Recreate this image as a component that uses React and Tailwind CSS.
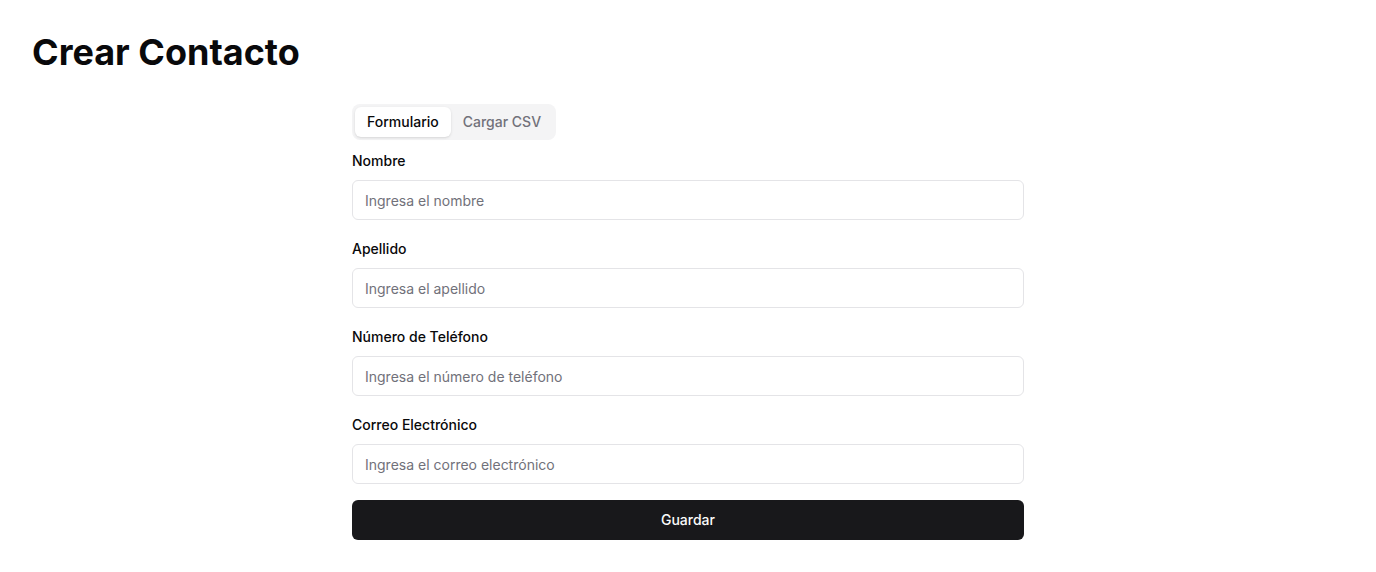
import React, { useState } from 'react';

const fields = [
  { id: 'nombre', label: 'Nombre', placeholder: 'Ingresa el nombre', type: 'text' },
  { id: 'apellido', label: 'Apellido', placeholder: 'Ingresa el apellido', type: 'text' },
  { id: 'telefono', label: 'Número de Teléfono', placeholder: 'Ingresa el número de teléfono', type: 'tel' },
  { id: 'correo', label: 'Correo Electrónico', placeholder: 'Ingresa el correo electrónico', type: 'email' },
];

export default function App() {
  const [tab, setTab] = useState('form');

  return (
    <div className="min-h-screen bg-white px-8 pt-8 font-['Inter',sans-serif] text-[#09090b]">
      <h1 className="mb-8 text-4xl leading-10 font-bold">Crear Contacto</h1>

      <div className="mx-auto max-w-2xl">
        <div className="inline-flex h-9 items-center rounded-lg bg-[#f4f4f5] p-[3px] text-[#71717a]">
          <button
            onClick={() => setTab('form')}
            className={`h-[30px] rounded-md border border-transparent px-[11px] text-sm font-medium ${tab === 'form' ? 'bg-white text-[#09090b] shadow-sm' : ''}`}
          >
            Formulario
          </button>
          <button
            onClick={() => setTab('csv')}
            className={`h-[30px] rounded-md border border-transparent px-[11px] text-sm font-medium ${tab === 'csv' ? 'bg-white text-[#09090b] shadow-sm' : ''}`}
          >
            Cargar CSV
          </button>
        </div>

        <form className="mt-[11px]" onSubmit={(e) => e.preventDefault()}>
          <div className="space-y-[19px]">
            {fields.map((f) => (
              <div key={f.id}>
                <label htmlFor={f.id} className="mb-[9px] block text-sm leading-5 font-medium">
                  {f.label}
                </label>
                <input
                  id={f.id}
                  type={f.type}
                  placeholder={f.placeholder}
                  className="h-10 w-full rounded-md border border-[#e4e4e7] bg-white px-3 text-sm text-[#09090b] placeholder:text-[#71717a] outline-none"
                />
              </div>
            ))}
          </div>
          <button
            type="submit"
            className="mt-4 h-10 w-full rounded-md bg-[#18181b] text-sm font-medium text-[#fafafa]"
          >
            Guardar
          </button>
        </form>
      </div>
    </div>
  );
}
